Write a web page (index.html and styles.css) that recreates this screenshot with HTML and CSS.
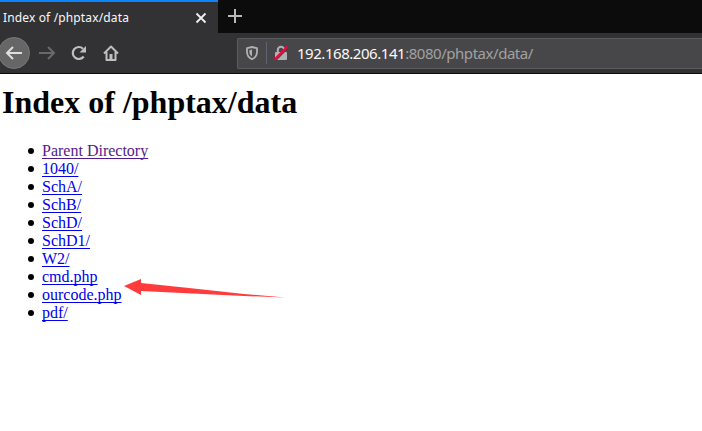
FILE: index.html
```html
<!DOCTYPE html>
<html lang="en">
<head>
<meta charset="utf-8">
<title>Index of /phptax/data</title>
<link rel="stylesheet" href="styles.css">
</head>
<body>
<header class="browser">
  <div class="tabs">
    <div class="tab">
      <span class="tab-title">Index of /phptax/data</span>
      <svg class="close" width="12" height="12" viewBox="0 0 12 12"><path d="M1.500 1.500l9 9m0-9l-9 9"/></svg>
    </div>
    <svg class="plus" width="16" height="16" viewBox="0 0 16 16"><path d="M8 1v14M1 8h14"/></svg>
  </div>
  <nav class="toolbar">
    <div class="back"><svg width="18" height="16" viewBox="0 0 18 16"><path d="M17 8H2M8 2L2 8l6 6"/></svg></div>
    <svg class="forward" width="18" height="16" viewBox="0 0 18 16"><path d="M1 8h15M10 2l6 6-6 6"/></svg>
    <svg class="reload" width="16" height="16" viewBox="0 0 16 16"><path d="M12.700 11.500A6 6 0 1 1 12 3.700"/><path class="fill" d="M15 1v6.500H8.500z"/></svg>
    <svg class="home" width="16" height="16" viewBox="0 0 16 16"><path d="M1 8.500l7-7 7 7M3.500 7v8h9V7"/><path class="door" d="M6.500 9h3v5h-3z"/></svg>
    <div class="address">
      <svg class="shield" width="12" height="14" viewBox="0 0 12 14"><path d="M6 1L11 2.200V6c0 3.500-1.900 5.700-5 7.200C2.900 11.700 1 9.500 1 6V2.200z"/><path class="inner" d="M6 3.500V10.500C4.300 9.400 3.400 8 3.400 6V4.200z"/></svg>
      <span class="divider"></span>
      <svg class="lock" width="16" height="16" viewBox="0 0 16 16"><path class="shackle" d="M4.800 8V5a3.200 3.200 0 0 1 6.400 0v3"/><rect x="2" y="7" width="12" height="8" rx="1"/><path class="gap" d="M2.500 15.500L15.500 2.500"/><path class="slash" d="M1.500 14.500L14.500 1.500"/></svg>
      <span class="url"><b>192.168.206.141</b>:8080/phptax/data/</span>
    </div>
  </nav>
</header>
<main>
  <h1>Index of /phptax/data</h1>
  <ul>
    <li><a class="visited" href="#">Parent Directory</a></li>
    <li><a href="#">1040/</a></li>
    <li><a href="#">SchA/</a></li>
    <li><a href="#">SchB/</a></li>
    <li><a href="#">SchD/</a></li>
    <li><a href="#">SchD1/</a></li>
    <li><a href="#">W2/</a></li>
    <li><a href="#">cmd.php</a></li>
    <li><a href="#">ourcode.php</a></li>
    <li><a href="#">pdf/</a></li>
  </ul>
</main>
<svg class="arrow" width="162" height="20" viewBox="0 0 162 20"><path d="M0 7L17 0V4L65 9 120 15 161 18.500 120 17 17 12V16z"/></svg>
</body>
</html>
```
FILE: styles.css
```css
* { box-sizing: border-box; }
body {
  margin: 0;
  height: 431px;
  overflow: hidden;
  background: #fff;
  color: #000;
  font-family: "Liberation Serif", serif;
  font-size: 16px;
}
svg { display: block; flex: none; fill: none; }
.browser { font-family: "Noto Sans", sans-serif; }
.tabs { display: flex; height: 33px; background: #0c0c0d; }
.tab {
  display: flex;
  align-items: center;
  justify-content: space-between;
  width: 218px;
  padding: 0 11px 0 3px;
  border-top: 2px solid #0a84ff;
  background: #323234;
}
.tab-title { color: #f9f9fa; font-size: 12px; line-height: 16px; letter-spacing: 0.14px; white-space: nowrap; }
.close { stroke: #f0f0f1; stroke-width: 1.8; }
.plus { margin: 8px 0 0 9px; stroke: #b9b9ba; stroke-width: 2; }
.toolbar {
  display: flex;
  align-items: center;
  height: 41px;
  border-bottom: 1px solid #0c0c0d;
  background: #323234;
}
.back {
  display: flex;
  flex: none;
  align-items: center;
  justify-content: center;
  width: 32px;
  height: 32px;
  margin-left: -2px;
  border: 1px solid #777778;
  border-radius: 50%;
  background: #666667;
  stroke: #dededf;
  stroke-width: 2;
}
.forward { margin-left: 8px; stroke: #69696b; stroke-width: 2; }
.reload { margin-left: 15px; stroke: #bfbfc0; stroke-width: 2.2; }
.reload .fill { fill: #bfbfc0; stroke: none; }
.home { margin-left: 16px; stroke: #bfbfc0; stroke-width: 2; stroke-linejoin: round; }
.home .door { fill: #bfbfc0; stroke: none; }
.address {
  display: flex;
  flex: 1;
  align-items: center;
  height: 31px;
  margin-left: 118px;
  padding-left: 8px;
  border: 1px solid #5c5c5f;
  border-right: 0;
  border-radius: 2px 0 0 2px;
  background: #474749;
}
.shield { stroke: #b1b1b3; stroke-width: 1.8; }
.shield .inner { fill: #b1b1b3; stroke: none; }
.divider { width: 1px; height: 22px; margin: 0 6px 0 8px; background: #5d6471; }
.lock .shackle { stroke: #b1b1b3; stroke-width: 2; }
.lock rect { fill: #b1b1b3; }
.lock .gap { stroke: #474749; stroke-width: 1.5; }
.lock .slash { stroke: #f5003d; stroke-width: 2; }
.url { margin-left: 8px; color: #a1a1a3; font-size: 15px; line-height: 22px; letter-spacing: -0.46px; white-space: nowrap; }
.url b { color: #f9f9fa; font-weight: 400; }
main { padding: 10px 2px; }
h1 { margin: 0; font-size: 32px; line-height: 36px; }
ul { margin: 22px 0 0; padding-left: 40px; list-style: none; }
li { display: flex; align-items: center; height: 18px; line-height: 18px; }
li::before {
  content: "";
  width: 6px;
  height: 6px;
  margin: 0 8px 0 -14px;
  border-radius: 50%;
  background: #000;
}
a { color: #0000ee; text-decoration: underline; text-decoration-thickness: 1px; text-underline-offset: 2px; text-decoration-skip-ink: none; }
a.visited { color: #551a8b; }
.arrow { position: absolute; left: 124px; top: 279px; fill: #ff3b3b; }
```
